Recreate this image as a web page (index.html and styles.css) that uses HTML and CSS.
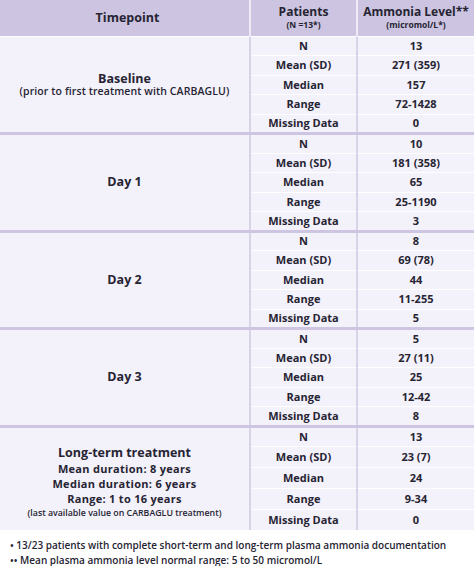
FILE: index.html
```html
<!DOCTYPE html>
<html>
<head>
<meta charset="utf-8">
<link rel="stylesheet" href="styles.css">
</head>
<body>
<table class="tbl">
  <colgroup>
    <col class="c1"><col class="c2"><col class="c3">
  </colgroup>
  <thead>
    <tr class="head">
      <th class="h1">Timepoint</th>
      <th class="h2"><div class="ht">Patients</div><div class="hs">(N =13*)</div></th>
      <th class="h3"><div class="ht">Ammonia Level**</div><div class="hs">(micromol/L*)</div></th>
    </tr>
  </thead>
  <tbody class="grp">
    <tr><td class="tp" rowspan="5"><div class="tpt">Baseline</div><div class="tps">(prior to first treatment with CARBAGLU)</div></td><td class="lb">N</td><td class="vl">13</td></tr>
    <tr><td class="lb">Mean (SD)</td><td class="vl">271 (359)</td></tr>
    <tr><td class="lb">Median</td><td class="vl">157</td></tr>
    <tr><td class="lb">Range</td><td class="vl">72-1428</td></tr>
    <tr class="last"><td class="lb">Missing Data</td><td class="vl">0</td></tr>
  </tbody>
  <tbody class="grp">
    <tr><td class="tp" rowspan="5"><div class="tpt">Day 1</div></td><td class="lb">N</td><td class="vl">10</td></tr>
    <tr><td class="lb">Mean (SD)</td><td class="vl">181 (358)</td></tr>
    <tr><td class="lb">Median</td><td class="vl">65</td></tr>
    <tr><td class="lb">Range</td><td class="vl">25-1190</td></tr>
    <tr class="last"><td class="lb">Missing Data</td><td class="vl">3</td></tr>
  </tbody>
  <tbody class="grp">
    <tr><td class="tp" rowspan="5"><div class="tpt">Day 2</div></td><td class="lb">N</td><td class="vl">8</td></tr>
    <tr><td class="lb">Mean (SD)</td><td class="vl">69 (78)</td></tr>
    <tr><td class="lb">Median</td><td class="vl">44</td></tr>
    <tr><td class="lb">Range</td><td class="vl">11-255</td></tr>
    <tr class="last"><td class="lb">Missing Data</td><td class="vl">5</td></tr>
  </tbody>
  <tbody class="grp">
    <tr><td class="tp" rowspan="5"><div class="tpt">Day 3</div></td><td class="lb">N</td><td class="vl">5</td></tr>
    <tr><td class="lb">Mean (SD)</td><td class="vl">27 (11)</td></tr>
    <tr><td class="lb">Median</td><td class="vl">25</td></tr>
    <tr><td class="lb">Range</td><td class="vl">12-42</td></tr>
    <tr class="last"><td class="lb">Missing Data</td><td class="vl">8</td></tr>
  </tbody>
  <tbody class="grp lt">
    <tr><td class="tp" rowspan="5"><div class="tpt">Long-term treatment</div><div class="tpd">Mean duration: 8 years</div><div class="tpd">Median duration: 6 years</div><div class="tpd">Range: 1 to 16 years</div><div class="tpn">(last available value on CARBAGLU treatment)</div></td><td class="lb">N</td><td class="vl">13</td></tr>
    <tr><td class="lb">Mean (SD)</td><td class="vl">23 (7)</td></tr>
    <tr><td class="lb">Median</td><td class="vl">24</td></tr>
    <tr><td class="lb">Range</td><td class="vl">9-34</td></tr>
    <tr class="end"><td class="lb">Missing Data</td><td class="vl">0</td></tr>
  </tbody>
</table>
<div class="notes">
  <p>• 13/23 patients with complete short-term and long-term plasma ammonia documentation</p>
  <p>•• Mean plasma ammonia level normal range: 5 to 50 micromol/L</p>
</div>
</body>
</html>
```
FILE: styles.css
```css
* { box-sizing: border-box; }
html, body { margin: 0; padding: 0; background: #ffffff; }
body {
  font-family: "Open Sans", "Liberation Sans", sans-serif;
  color: #262433;
  width: 474px;
}
.tbl {
  width: 474px;
  border-collapse: collapse;
  table-layout: fixed;
}
.c1 { width: 250px; }
.c2 { width: 107px; }
.c3 { width: 117px; }
.head th {
  background: #ccc4e0;
  height: 36px;
  padding: 0;
  text-align: center;
  vertical-align: middle;
  border-bottom: 1px solid #ffffff;
  font-weight: 700;
}
.head .h2, .head .h3 { border-left: 2px solid #eeebf6; }
.h1 { font-size: 12.5px; padding-left: 6px !important; }
.ht { font-size: 12px; line-height: 14px; }
.hs { font-size: 8.5px; line-height: 11px; }
.grp td {
  background: #f3f1fa;
  padding: 0;
  text-align: center;
  vertical-align: middle;
}
.lb, .vl {
  height: 19.5px;
  font-size: 11px;
  font-weight: 700;
  border-bottom: 1px solid #ffffff;
  line-height: 14px;
}
.lb { border-left: 2px solid #d9d3e8; }
.vl { border-left: 2px solid #d9d3e8; }
.grp .last td { border-bottom: 3px solid #cdc5e1; }
.grp .tp { border-bottom: 3px solid #cdc5e1; background: #f3f1fa; }
.grp.lt .tp { border-bottom: none; padding-top: 6px; }
.grp.lt .lb, .grp.lt .vl { height: 20.8px; }
.grp .end td { border-bottom: none; }
.tpt { font-size: 12.5px; font-weight: 700; line-height: 14px; }
.tps { font-size: 10.5px; font-weight: 600; line-height: 11px; letter-spacing: 0.1px; }
.lt .tpt { line-height: 17px; }
.tpd { font-size: 11px; font-weight: 700; line-height: 15px; letter-spacing: 0.3px; }
.tpn { font-size: 8.8px; font-weight: 600; line-height: 12px; margin-top: 1.5px; }
.notes { padding: 8px 0 0 10px; }
.notes p {
  margin: 0;
  font-size: 10px;
  font-weight: 600;
  line-height: 15px;
  color: #262433;
}
```
